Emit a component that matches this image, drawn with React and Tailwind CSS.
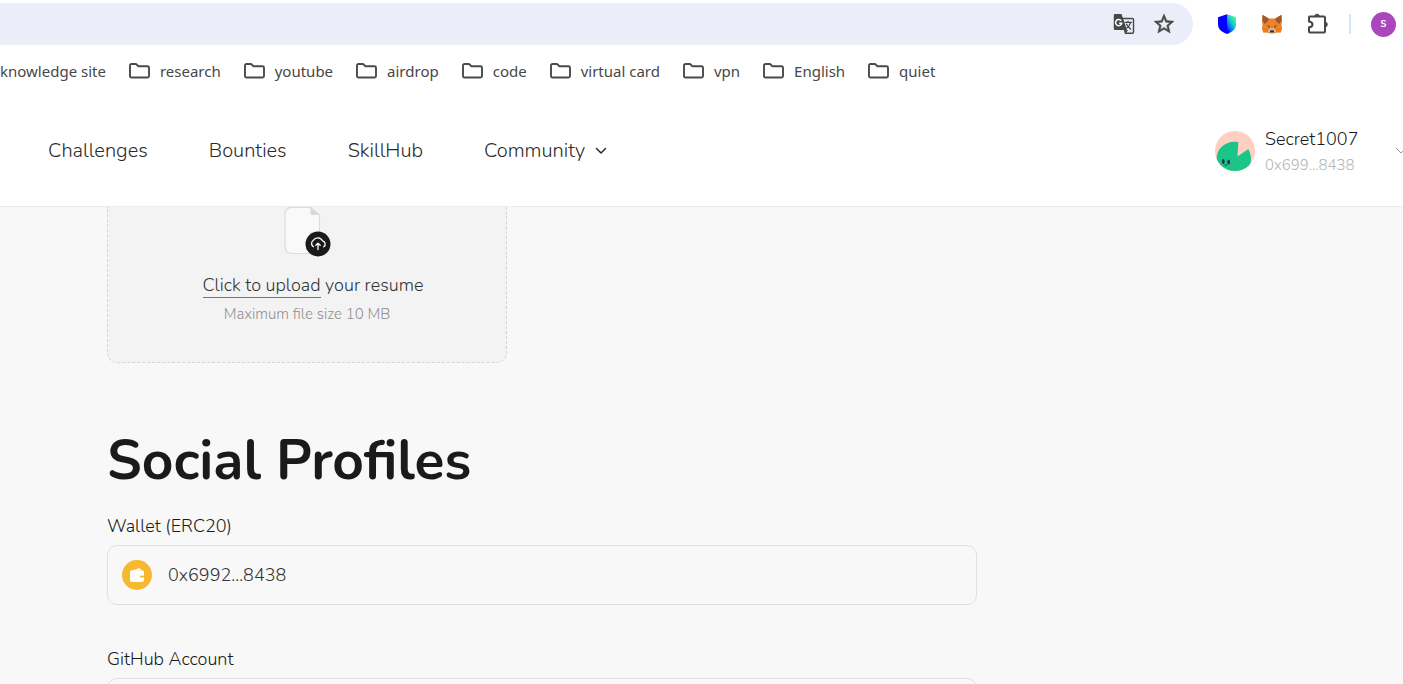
import React from 'react';

const bookmarks = ['research', 'youtube', 'airdrop', 'code', 'virtual card', 'vpn', 'English', 'quiet'];

function FolderIcon() {
  return (
    <svg viewBox="0 0 21 16" className="h-4 w-[21px] shrink-0" fill="none" stroke="#4a4a4a" strokeWidth="1.900" strokeLinejoin="round" aria-hidden="true">
      <path d="M1 2.500Q1 1 2.500 1H7l2.500 2.300h9q1.500 0 1.500 1.500v8.200q0 1.500-1.500 1.500h-16Q1 14.500 1 13z" />
    </svg>
  );
}

function TranslateIcon() {
  return (
    <svg viewBox="0 0 22 22" className="size-[22px]" aria-hidden="true">
      <path d="M9 5.500h10.500q1 0 1 1v12.500q0 1.200-1 1.200H12.500z" fill="#ebeef8" stroke="#474747" strokeWidth="1.400" />
      <path d="M2 1h6.500l1.200 3.500L14 17H2Q.8 17 .8 15.800V2.200Q.8 1 2 1z" fill="#474747" />
      <path d="M11 17l1.500 4.200L15 17z" fill="#474747" />
      <path d="M8.200 7.800A3.100 3.100 0 1 0 8.700 10.300H6.200" fill="none" stroke="#fff" strokeWidth="1.500" />
      <path d="M11.500 9.300h7.500M15 7.800v1.500M17.600 9.300q-1 4-4.300 6.200M13.300 10.800q1.500 3.200 4.700 5.700" fill="none" stroke="#474747" strokeWidth="1.300" />
    </svg>
  );
}

function StarIcon() {
  return (
    <svg viewBox="0 0 24 24" className="size-6" fill="#474747" stroke="#474747" strokeWidth=".5" aria-hidden="true">
      <path d="M22 9.240l-7.190-.62L12 2 9.190 8.630 2 9.240l5.460 4.730L5.820 21 12 17.270 18.180 21l-1.630-7.030L22 9.240zM12 15.400l-3.760 2.270 1-4.280-3.320-2.880 4.380-.38L12 6.100l1.710 4.040 4.380.38-3.320 2.880 1 4.280L12 15.400z" />
    </svg>
  );
}

function ShieldIcon() {
  return (
    <svg viewBox="0 0 20 20" className="size-5" aria-hidden="true">
      <defs>
        <linearGradient id="shieldRight" x1="1" y1="0" x2="0.250" y2="1">
          <stop offset="0.150" stopColor="#48ff91" />
          <stop offset="0.500" stopColor="#18c8c8" />
          <stop offset="0.750" stopColor="#0a78f5" />
          <stop offset="1" stopColor="#0500ff" />
        </linearGradient>
      </defs>
      <path d="M1 3.200L10 .3V20C3.500 17.300 1 14.800 1 10z" fill="#0500ff" />
      <path d="M19 3.200L10 .3V20c6.500-2.700 9-5.200 9-10z" fill="url(#shieldRight)" />
    </svg>
  );
}

function FoxIcon() {
  return (
    <svg viewBox="0 0 22 20" className="h-5 w-[22px]" aria-hidden="true">
      <path d="M1.500.8L8 4.500h6L20.500.8l.5 5.700-.5 4 .5 4-1.500 4-4.500.3-2 .7H9l-2-.7-4.500-.3L1 14.500l.5-4-.5-4z" fill="#ee8228" />
      <path d="M1.700 1L8 4.800 6.500 8 3.500 10 1.300 6.500zM20.300 1L14 4.800 15.500 8l3 2 2.200-3.500z" fill="#9a5a30" />
      <path d="M1 14.300h5.800l.7 3.200-5.200.9zM21 14.300h-5.800l-.7 3.200 5.200.9z" fill="#f07a1c" />
      <path d="M7.500 16l1.800-1.500h3.400l1.800 1.500v1.800l-2 1.400h-3l-2-1.400z" fill="#d6bfae" />
      <path d="M9.300 16.300h3.400l.4 2.200H8.900zM6 11.300l2.800 1-.6 1.300zM16 11.300l-2.800 1 .6 1.300z" fill="#2b2f3a" />
    </svg>
  );
}

function PuzzleIcon() {
  return (
    <svg viewBox="0 0 22 22" className="size-[22px]" fill="none" stroke="#474747" strokeWidth="2" strokeLinejoin="round" aria-hidden="true">
      <path d="M2.500 3.500H17q1 0 1 1V18.500q0 1-1 1H3q-1 0-1-1v-4.200q3.500-.3 3.500-2.800T2 8.500V4.500q0-1 .5-1z" />
      <path d="M7.800 3.500a2.300 2.300 0 0 1 4.600 0zM18 9.200a2.300 2.300 0 0 1 0 4.600z" fill="#474747" strokeWidth="1" />
    </svg>
  );
}

function Avatar() {
  return (
    <svg viewBox="0 0 40 40" className="size-10 shrink-0" role="img" aria-label="Profile picture">
      <clipPath id="avatarClip"><circle cx="20" cy="20" r="20" /></clipPath>
      <g clipPath="url(#avatarClip)">
        <rect width="40" height="40" fill="#ffcfc2" />
        <path d="M22.500 25.500L23.300 11.300C13 9 1.500 16 1.500 28.500V40H30C36.500 35 38 27 33.300 18z" fill="#1bc58a" />
        <ellipse cx="8.300" cy="30.500" rx="1.300" ry="2.500" fill="#173349" />
        <ellipse cx="13.700" cy="31" rx="1.300" ry="2.500" fill="#173349" />
        <path d="M9.700 33.700q1.300 1.500 2.500 0" fill="none" stroke="#173349" strokeWidth=".9" />
        <circle cx="5.600" cy="33" r="1.100" fill="#c97560" />
        <circle cx="16.500" cy="34.300" r="1.100" fill="#c97560" />
      </g>
    </svg>
  );
}

function UploadIcon() {
  return (
    <svg viewBox="0 1 47 50" className="h-[50px] w-[47px]" fill="none" aria-hidden="true">
      <path d="M8 1.500h18.500L35.500 9v31q0 7.500-7.500 7.500H8Q1 47.500 1 40V8.500Q1 1.500 8 1.500z" fill="#f9f9f9" stroke="#dcdcdc" strokeWidth="1.200" />
      <path d="M26.500 1.500L35.500 9H28.500q-2 0-2-2z" fill="#d8d8d8" />
      <circle cx="34" cy="38" r="12.500" fill="#1a1a1a" />
      <path d="M29.500 40.800a3.800 3.800 0 0 1-.2-6.500A5.300 5.300 0 0 1 38.500 34.800a3.300 3.300 0 0 1 1.200 6M34 43.500v-6M31.800 39.300l2.200-2.200 2.200 2.200" stroke="#fff" strokeWidth="1.300" strokeLinecap="round" strokeLinejoin="round" />
    </svg>
  );
}

function WalletIcon() {
  return (
    <svg viewBox="0 0 30 30" className="size-[30px] shrink-0" aria-hidden="true">
      <circle cx="15" cy="15" r="15" fill="#f5b82e" />
      <path d="M10.500 10.300l6.700-2q1.500-.4 1.600 2z" fill="#fff" />
      <path d="M9.800 10.300H20q2 0 2 2V20q0 2-2 2H10q-2 0-2-2v-7.700q0-2 1.800-2z" fill="#fff" />
      <rect x="18" y="15.500" width="4" height="1.900" rx=".9" fill="#f5b82e" />
    </svg>
  );
}

function Chevron({ className }) {
  return (
    <svg viewBox="0 0 12 8" className={className} fill="none" stroke="currentColor" strokeLinecap="round" strokeLinejoin="round" aria-hidden="true">
      <path d="M1.500 1.500L6 6l4.500-4.500" />
    </svg>
  );
}

function Toolbar() {
  return (
    <div className="flex h-[45px] items-center pt-[3px]">
      <div className="flex h-full flex-1 items-center justify-end gap-[17px] rounded-r-full bg-[#ebeef8] pr-[17px]">
        <button aria-label="Translate this page"><TranslateIcon /></button>
        <button aria-label="Bookmark this page"><StarIcon /></button>
      </div>
      <div className="flex shrink-0 items-center pr-[7px] pl-6">
        <button aria-label="Wallet extension"><ShieldIcon /></button>
        <button className="ml-6" aria-label="Fox extension"><FoxIcon /></button>
        <button className="ml-6" aria-label="Extensions"><PuzzleIcon /></button>
        <span className="mr-5 ml-5 h-5 w-0.5 rounded bg-[#d3e2fd]" />
        <button className="flex size-[25px] items-center justify-center rounded-full bg-[#ab47bc] text-[13px] font-semibold text-white" aria-label="Browser profile">s</button>
      </div>
    </div>
  );
}

function BookmarksBar() {
  return (
    <nav aria-label="Bookmarks" className="flex h-[52px] items-center gap-[23px] overflow-hidden font-['Noto_Sans','Open_Sans',sans-serif] text-[15px] whitespace-nowrap text-[#474747]">
      <a href="#knowledge">knowledge site</a>
      {bookmarks.map((name) => (
        <a key={name} href={'#' + name} className="flex items-center gap-2.5">
          <FolderIcon />
          {name}
        </a>
      ))}
    </nav>
  );
}

function SiteHeader() {
  return (
    <header className="flex h-[110px] items-center justify-between border-b border-[#ececec] pb-0.5 pl-12">
      <nav aria-label="Main" className="flex items-center gap-[61px] text-[20px] font-light text-[#2b2b2b]">
        <a href="#challenges">Challenges</a>
        <a href="#bounties">Bounties</a>
        <a href="#skillhub">SkillHub</a>
        <button className="flex items-center gap-2.5">
          Community
          <Chevron className="h-2 w-3 stroke-[1.5]" />
        </button>
      </nav>
      <button className="-mr-1 flex items-center text-left">
        <Avatar />
        <span className="ml-2.5 flex w-[130px] flex-col pt-0.5">
          <span className="text-[18px] leading-[26px] font-light text-[#1a1a1a]">Secret1007</span>
          <span className="text-[15px] leading-[26px] font-light text-[#b5b5b5]">0x699...8438</span>
        </span>
        <Chevron className="h-2 w-3 text-[#a0a0a0]" />
      </button>
    </header>
  );
}

function Field({ id, label, value, icon }) {
  return (
    <div className="flex flex-col gap-[7px]">
      <label htmlFor={id} className="self-start text-[18px] leading-6 font-light text-[#1a1a1a]">{label}</label>
      <div className="flex h-[60px] items-center gap-4 rounded-[10px] border border-[#e0e0e0] px-3.5">
        {icon}
        <input id={id} defaultValue={value} className="min-w-0 flex-1 bg-transparent text-[18px] font-light text-[#333] outline-none" />
      </div>
    </div>
  );
}

export default function App() {
  return (
    <div className="flex h-screen flex-col overflow-hidden bg-white font-['Nunito','Open_Sans',sans-serif]">
      <Toolbar />
      <BookmarksBar />
      <SiteHeader />
      <main className="flex-1 overflow-hidden bg-[#f8f8f8] pl-[107px]">
        <section className="flex h-[156px] w-[400px] flex-col items-center rounded-b-[10px] border border-t-0 border-dashed border-[#d6d6d6] bg-[#f3f3f3]">
          <UploadIcon />
          <p className="mt-4 pl-3 text-[18px] leading-[22px] font-light text-[#333]">
            <button className="border-b border-[#777] leading-6">Click to upload</button> your resume
          </p>
          <p className="mt-1.5 text-[15px] leading-5 font-light text-[#8f8f8f]">Maximum file size 10 MB</p>
        </section>
        <h1 className="mt-[63px] text-[55px] leading-[70px] font-bold text-[#1a1a1a]">Social Profiles</h1>
        <form className="mt-[18px] flex max-w-[870px] flex-col gap-[42px]">
          <Field id="wallet" label="Wallet (ERC20)" value="0x6992...8438" icon={<WalletIcon />} />
          <Field id="github" label="GitHub Account" value="" />
        </form>
      </main>
    </div>
  );
}
